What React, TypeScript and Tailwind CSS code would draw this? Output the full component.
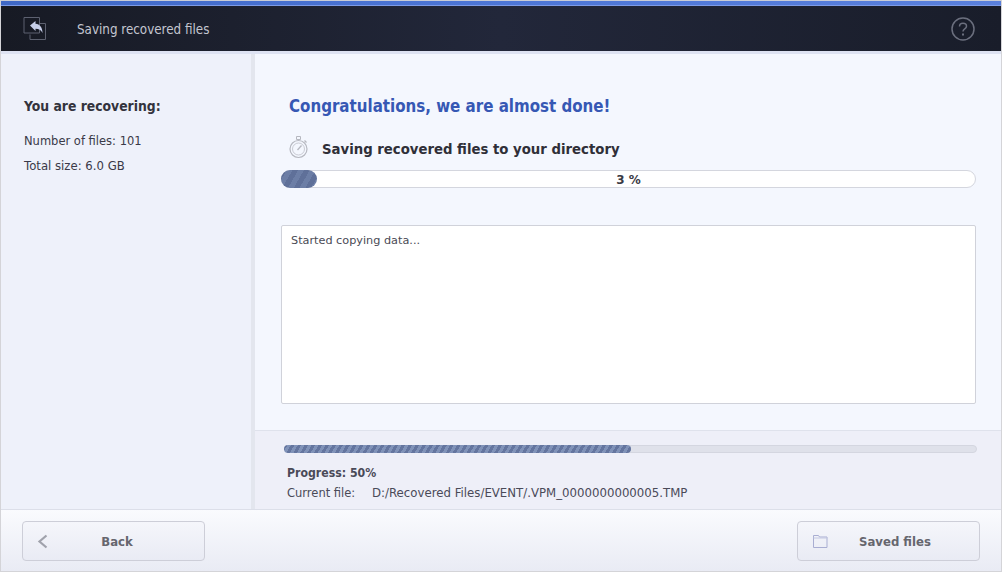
export default function App() {
  return (
    <div className="w-[1002px] h-[572px] flex flex-col overflow-hidden bg-[#f4f7fe] border border-[#d4d4d8] border-t-0 font-['DejaVu_Sans',sans-serif] text-[11.5px] text-[#3a3a48]">
      <div className="h-[1px] bg-[#c9cdd6] shrink-0" />
      <div className="h-[5px] shrink-0 bg-gradient-to-r from-[#3f68c6] via-[#4d76d6] to-[#5a80dc] border-b border-[#7d9be6]" />
      <header className="h-[45px] shrink-0 flex items-center justify-between bg-gradient-to-r from-[#171a24] via-[#22273a] to-[#191d2a] pl-[22px] pr-[26px]">
        <div className="flex items-center">
          <svg className="mt-[1px]" width="25" height="25" viewBox="0 0 25 25" fill="none">
            <path d="M1 .5h15.500v15.500h-15.500z" stroke="#5d6170" strokeWidth="1" />
            <path d="M7 17.500v5h15.500v-16h-6" stroke="#5d6170" strokeWidth="1" />
            <path d="M7 8.500l5.500-4.500v2.800c4.500.5 7 3.500 7 9.200-1.500-3-3.500-4.300-7-4.300v2.300z" fill="#c6cee8" />
          </svg>
          <span className="ml-[29px] mt-[3px] font-['DejaVu_Sans_Condensed',sans-serif] text-[13.3px] text-[#c3c6d0]">Saving recovered files</span>
        </div>
        <svg width="24" height="24" viewBox="0 0 24 24" fill="none">
          <circle cx="12" cy="12" r="11" stroke="#6b6f7e" strokeWidth="1.500" />
          <path d="M8.500 9.500c0-2 1.500-3.200 3.500-3.200s3.500 1.200 3.500 3c0 2.600-3.500 2.700-3.500 5.200" stroke="#6b6f7e" strokeWidth="1.500" />
          <path d="M11 16.500h2v2h-2z" fill="#6b6f7e" />
        </svg>
      </header>
      <div className="h-[3px] shrink-0 bg-[#dde2f2]" />
      <div className="flex-1 flex min-h-0">
        <aside className="w-[250px] shrink-0 bg-[#eef1fa] pl-[23px] pt-[42px]">
          <h2 className="font-['DejaVu_Sans_Condensed',sans-serif] text-[13.8px] font-bold text-[#33333d] leading-[20px]">You are recovering:</h2>
          <p className="mt-[17px] leading-[16px]">Number of files: 101</p>
          <p className="mt-[9px] leading-[16px] text-[11.7px]">Total size: 6.0 GB</p>
        </aside>
        <div className="w-[4px] shrink-0 bg-[#e3e6ee]" />
        <main className="flex-1 flex flex-col min-w-0">
          <section className="flex-1 pl-[26px] pr-[25px] pt-[40px]">
            <h1 className="ml-[8px] font-['DejaVu_Sans_Condensed',sans-serif] text-[16.75px] font-bold text-[#3658b4] leading-[24px]">Congratulations, we are almost done!</h1>
            <div className="mt-[20px] ml-[8px] flex items-center">
              <svg className="mt-[-3px]" width="20" height="24" viewBox="0 0 20 24" fill="none" stroke="#b6b8c0">
                <path d="M7.500 1.500h4v3h-4z" />
                <circle cx="9.500" cy="14" r="8.500" strokeWidth="1.200" />
                <circle cx="9.500" cy="14" r="6" strokeWidth=".7" />
                <path d="M8.500 15l4-4.500" strokeWidth="1.300" />
                <path d="M15.500 5.500l2 2" strokeWidth="1.200" />
              </svg>
              <span className="ml-[13px] font-['DejaVu_Sans_Condensed',sans-serif] text-[14.75px] font-bold text-[#2f2f38] leading-[20px]">Saving recovered files to your directory</span>
            </div>
            <div className="mt-[11px] relative h-[18px] rounded-full bg-white border border-[#d4d6de] flex items-center justify-center">
              <div className="absolute left-[-1px] top-[-1px] h-[18px] w-[36px] rounded-full bg-[repeating-linear-gradient(120deg,#5f7099_0,#5f7099_5px,#6c7ea6_5px,#6c7ea6_10px)]" />
              <span className="relative font-bold text-[#3a3a44] text-[12px] pt-[1px]">3 %</span>
            </div>
            <div className="mt-[37px] h-[179px] bg-white border border-[#d0d2da] rounded-[2px] px-[9px] pt-[7px] leading-[16px] text-[11.25px] text-[#4a4a55]">Started copying data...</div>
          </section>
          <section className="h-[79px] shrink-0 bg-[#eeeff8] border-t border-[#dfe2ec] pl-[29px] pr-[24px] pt-[14px]">
            <div className="h-[8px] rounded-full bg-[#dfe1ea] border border-[#d4d6e0] relative">
              <div className="absolute left-[-1px] top-[-1px] h-[8px] w-[347px] rounded-full bg-[repeating-linear-gradient(120deg,#64759f_0,#64759f_3px,#8092b8_3px,#8092b8_6px)]" />
            </div>
            <p className="ml-[3px] mt-[12px] font-['DejaVu_Sans_Condensed',sans-serif] text-[12.2px] font-bold leading-[16px] text-[#4a4a58]">Progress: 50%</p>
            <p className="ml-[3px] mt-[4px] leading-[16px] text-[#4a4a58] flex">
              <span className="w-[85px]">Current file:</span>
              <span className="text-[11.75px]">D:/Recovered Files/EVENT/.VPM_0000000000005.TMP</span>
            </p>
          </section>
        </main>
      </div>
      <footer className="h-[62px] shrink-0 border-t border-[#dcdfe9] bg-gradient-to-b from-[#fafbfe] to-[#e9ebf4] flex items-center justify-between pl-[21px] pr-[21px] font-['DejaVu_Sans_Condensed',sans-serif]">
        <button className="relative w-[183px] h-[40px] rounded-[4px] border border-[#cdced8] bg-gradient-to-b from-[#f5f6fb] to-[#e9ebf4] font-bold text-[13px] text-[#66666e] flex items-center justify-center pl-[7px] pt-[3px]">
          <svg className="absolute left-[14px] top-[12px]" width="11" height="15" viewBox="0 0 11 15" fill="none"><path d="M9.500 1.500l-7 6 7 6" stroke="#a0a2ac" strokeWidth="2.200" /></svg>
          Back
        </button>
        <button className="relative w-[183px] h-[40px] rounded-[4px] border border-[#cdced8] bg-gradient-to-b from-[#f5f6fb] to-[#e9ebf4] font-bold text-[13px] text-[#66666e] flex items-center justify-center pl-[13px] pt-[3px]">
          <svg className="absolute left-[15px] top-[13px]" width="15" height="13" viewBox="0 0 15 13" fill="none"><path d="M.500 12.500v-12h5l1 1.500h7.500v10.500z" stroke="#a9aed2" /><path d="M.500 3h14" stroke="#c4c8e2" /></svg>
          Saved files
        </button>
      </footer>
    </div>
  );
}
